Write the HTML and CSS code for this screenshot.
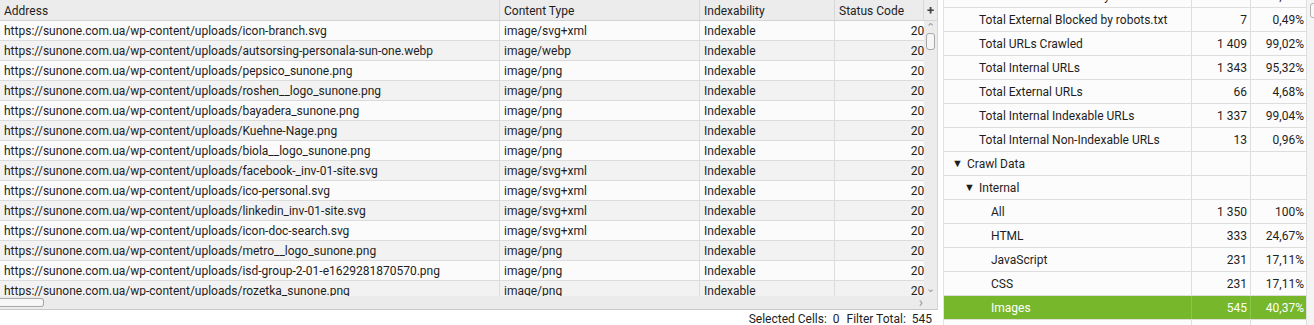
FILE: index.html
```html
<!DOCTYPE html>
<html>
<head>
  <title>Crawl Results - Images</title>
  <link rel="stylesheet" href="styles.css">
</head>
<body>
  <div class="app">
    <div class="results">
      <div class="grid">
        <div class="grid-head">
          <div class="hcell col-address">Address</div>
          <div class="hcell col-type">Content Type</div>
          <div class="hcell col-index">Indexability</div>
          <div class="hcell col-status">Status Code</div>
          <div class="hcell col-plus">+</div>
        </div>
        <div class="grid-body">
          <div class="rows" id="rows">
            <!-- rows are filled in by the script below -->
          </div>
          <div class="vscroll">
            <span class="arrow">&#8963;</span>
            <div class="vthumb"></div>
            <span class="arrow down">&#8964;</span>
          </div>
        </div>
        <div class="hscroll">
          <div class="hthumb"></div>
          <span class="harrow">&#8250;</span>
        </div>
      </div>
      <div class="statusbar">
        <span>Selected Cells:&nbsp; 0</span>
        <span>Filter Total:&nbsp; 545</span>
      </div>
    </div>

    <div class="overview">
      <div class="tree" id="tree"></div>
      <div class="oscroll"><div class="othumb"></div></div>
    </div>
  </div>

  <script>
    var urls = [
      ["icon-branch.svg", "image/svg+xml"],
      ["autsorsing-personala-sun-one.webp", "image/webp"],
      ["pepsico_sunone.png", "image/png"],
      ["roshen__logo_sunone.png", "image/png"],
      ["bayadera_sunone.png", "image/png"],
      ["Kuehne-Nage.png", "image/png"],
      ["biola__logo_sunone.png", "image/png"],
      ["facebook-_inv-01-site.svg", "image/svg+xml"],
      ["ico-personal.svg", "image/svg+xml"],
      ["linkedin_inv-01-site.svg", "image/svg+xml"],
      ["icon-doc-search.svg", "image/svg+xml"],
      ["metro__logo_sunone.png", "image/png"],
      ["isd-group-2-01-e1629281870570.png", "image/png"],
      ["rozetka_sunone.png", "image/png"]
    ];

    var rows = document.getElementById("rows");
    urls.forEach(function(u) {
      var row = document.createElement("div");
      row.className = "row";
      row.innerHTML = `
        <div class="cell col-address">https://sunone.com.ua/wp-content/uploads/${u[0]}</div>
        <div class="cell col-type">${u[1]}</div>
        <div class="cell col-index">Indexable</div>
        <div class="cell col-status"><span>200</span></div>
      `;
      rows.appendChild(row);
    });

    // level, label, count, percent, expandable, selected
    var items = [
      [2, "Total Internal Blocked by robots.txt", "12", "0,84%"],
      [2, "Total External Blocked by robots.txt", "7", "0,49%"],
      [2, "Total URLs Crawled", "1 409", "99,02%"],
      [2, "Total Internal URLs", "1 343", "95,32%"],
      [2, "Total External URLs", "66", "4,68%"],
      [2, "Total Internal Indexable URLs", "1 337", "99,04%"],
      [2, "Total Internal Non-Indexable URLs", "13", "0,96%"],
      [1, "Crawl Data", "", "", true],
      [2, "Internal", "", "", true],
      [3, "All", "1 350", "100%"],
      [3, "HTML", "333", "24,67%"],
      [3, "JavaScript", "231", "17,11%"],
      [3, "CSS", "231", "17,11%"],
      [3, "Images", "545", "40,37%", false, true],
      [3, "", "", ""]
    ];

    var tree = document.getElementById("tree");
    items.forEach(function(it) {
      var row = document.createElement("div");
      row.className = "trow" + (it[5] ? " selected" : "");
      var indent = 8 + (it[0] - 1) * 12;
      var toggle = it[4] ? '<span class="toggle">&#9660;</span>' : '<span class="toggle"></span>';
      row.innerHTML = `
        <div class="tcell tlabel" style="padding-left:${indent}px">${toggle}${it[1]}</div>
        <div class="tcell tnum">${it[2]}</div>
        <div class="tcell tpct">${it[3]}</div>
      `;
      tree.appendChild(row);
    });
  </script>
</body>
</html>
```

FILE: styles.css
```css
html, body {
  margin: 0;
  padding: 0;
  background-color: #ffffff;
  font-family: Roboto, "Liberation Sans", Arial, sans-serif;
  font-size: 12px;
  color: #1e1e1e;
}
.app {
  display: flex;
  height: 325px;
  overflow: hidden;
}
.results {
  width: 938px;
  display: flex;
  flex-direction: column;
}
.grid {
  border-right: 1px solid #d6d6d6;
  border-bottom: 1px solid #c8c8c8;
}
.grid-head {
  display: flex;
  height: 20px;
  background-color: #ececec;
  border-bottom: 1px solid #d4d4d4;
}
.hcell {
  display: flex;
  align-items: center;
  padding: 2px 0 0 4px;
  box-sizing: border-box;
  border-right: 1px solid #d8d8d8;
  white-space: nowrap;
  overflow: hidden;
}
.col-address {
  width: 500px;
}
.col-type {
  width: 200px;
}
.col-index {
  width: 135px;
}
.col-status {
  width: 89px;
}
.col-plus {
  width: 13px;
  padding: 0;
  justify-content: center;
  font-weight: bold;
  font-size: 13px;
  color: #444;
  border-right: none;
}
.grid-body {
  display: flex;
  height: 275px;
  overflow: hidden;
}
.rows {
  width: 924px;
}
.row {
  display: flex;
  height: 19px;
  border-bottom: 1px solid #dcdcdc;
  background-color: #fbfbfb;
}
.row:nth-child(even) {
  background-color: #f2f2f2;
}
.cell {
  display: flex;
  align-items: center;
  padding: 1px 0 0 4px;
  box-sizing: border-box;
  border-right: 1px solid #dcdcdc;
  white-space: nowrap;
  overflow: hidden;
}
.row .col-status {
  width: 89px;
  border-right: none;
  justify-content: flex-end;
}
.row .col-status span {
  margin-right: -7px;
}
.vscroll {
  width: 13px;
  background-color: #ececec;
  display: flex;
  flex-direction: column;
  align-items: center;
}
.vscroll .arrow {
  font-size: 11px;
  line-height: 10px;
  height: 10px;
  color: #9a9a9a;
  margin-top: 2px;
}
.vscroll .arrow.down {
  margin-top: auto;
  margin-bottom: 2px;
}
.vthumb {
  width: 7px;
  height: 15px;
  border: 1px solid #a8a8a8;
  border-radius: 3px;
  background-color: #f6f6f6;
}
.hscroll {
  display: flex;
  align-items: center;
  height: 13px;
  background-color: #ebebeb;
}
.hthumb {
  width: 43px;
  height: 7px;
  border: 1px solid #a8a8a8;
  border-left: none;
  border-radius: 0 3px 3px 0;
  background-color: #f6f6f6;
}
.harrow {
  margin-left: auto;
  margin-right: 14px;
  color: #9a9a9a;
  font-size: 14px;
  line-height: 13px;
}
.statusbar {
  display: flex;
  justify-content: flex-end;
  gap: 7px;
  padding: 2px 6px 0 0;
  white-space: nowrap;
}
.overview {
  flex: 1;
  display: flex;
  margin-left: 5px;
  background-color: #fcfcfc;
  border-left: 1px solid #e2e2e2;
  overflow: hidden;
}
.tree {
  width: 363px;
  margin-top: -16px;
}
.trow {
  display: flex;
  height: 23px;
  border-bottom: 1px solid #dedede;
}
.trow.selected {
  background-color: #76b72b;
  color: #ffffff;
}
.tcell {
  display: flex;
  align-items: center;
  box-sizing: border-box;
  white-space: nowrap;
  overflow: hidden;
}
.tlabel {
  width: 248px;
  border-right: 1px solid #dedede;
}
.toggle {
  display: inline-block;
  width: 15px;
  font-size: 11px;
}
.tnum {
  width: 59px;
  justify-content: flex-end;
  padding-right: 3px;
  border-right: 1px solid #dedede;
}
.tpct {
  width: 56px;
  justify-content: flex-end;
  padding-right: 2px;
  border-right: 1px solid #dedede;
}
.trow.selected .tlabel,
.trow.selected .tnum {
  border-right-color: #8cc44e;
}
.oscroll {
  flex: 1;
  background-color: #f4f4f4;
}
.othumb {
  width: 8px;
  height: 13px;
  margin: 3px 0 0 3px;
  border: 1px solid #b0b0b0;
  border-radius: 3px;
  background-color: #f8f8f8;
}
```
